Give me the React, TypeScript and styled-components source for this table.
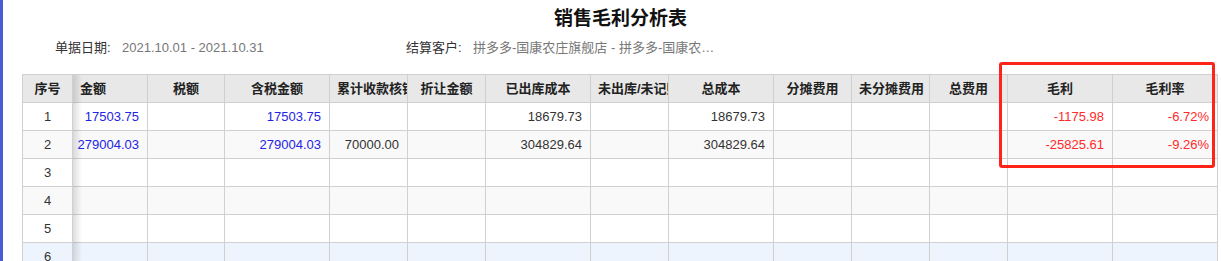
import { Fragment } from "react";
import styled, { createGlobalStyle } from "styled-components";

const GlobalStyle = createGlobalStyle`
  html, body {
    margin: 0;
    padding: 0;
    background: #fff;
  }
  body {
    font-family: "Liberation Sans", "Noto Sans CJK SC", sans-serif;
    color: #333;
  }
`;

const Page = styled.div`
  display: flex;
  min-height: 261px;
`;

const Stripe = styled.div`
  width: 3px;
  flex: none;
  background: #4b5bd5;
`;

const Content = styled.div`
  padding-left: 19px;
  width: 1197px;
`;

const Title = styled.h1`
  margin: 0;
  height: 38px;
  line-height: 38px;
  text-align: center;
  font-size: 19px;
  font-weight: bold;
  color: #111;
`;

const InfoBar = styled.div`
  display: flex;
  padding-left: 33px;
  height: 20px;
  line-height: 20px;
  font-size: 13px;
  margin-bottom: 16px;
`;

const InfoItem = styled.div`
  display: flex;
  width: 351px;
`;

const InfoLabel = styled.span`
  width: 67px;
  flex: none;
  color: #333;
`;

const InfoValue = styled.span<{ $max?: number }>`
  color: #777;
  white-space: nowrap;
  overflow: hidden;
  text-overflow: ellipsis;
  max-width: ${(p) => (p.$max ? `${p.$max}px` : "none")};
`;

const TableWrap = styled.div`
  position: relative;
`;

const COLS = [50, 75, 77, 105, 78, 78, 105, 78, 105, 78, 78, 78, 105, 105];

const Grid = styled.div`
  display: grid;
  grid-template-columns: ${COLS.map((w) => `${w}px`).join(" ")};
  grid-auto-rows: 28px;
  border-left: 1px solid #d0d0d0;
  border-top: 1px solid #d0d0d0;
  width: max-content;
`;

type Align = "left" | "center" | "right";

const Cell = styled.div<{ $align?: Align; $bg: string; $head?: boolean; $color?: string }>`
  position: relative;
  box-sizing: border-box;
  border-right: 1px solid #d0d0d0;
  border-bottom: 1px solid #d0d0d0;
  background: ${(p) => p.$bg};
  padding: ${(p) => (p.$align === "right" ? "0 8px 0 4px" : "0 7px")};
  line-height: 27px;
  font-size: 13px;
  font-weight: ${(p) => (p.$head ? "bold" : "normal")};
  color: ${(p) => p.$color || (p.$head ? "#222" : "#333")};
  text-align: ${(p) => p.$align || "center"};
  white-space: nowrap;
  overflow: hidden;
`;

// frozen first column, with the drop shadow over the next column
const FrozenCell = styled(Cell)`
  overflow: visible;
  z-index: 1;
  &::after {
    content: "";
    position: absolute;
    top: 0;
    bottom: -1px;
    right: -10px;
    width: 9px;
    background: linear-gradient(to right, rgba(0, 0, 0, 0.13), rgba(0, 0, 0, 0));
    pointer-events: none;
  }
`;

const Highlight = styled.div`
  position: absolute;
  left: 977px;
  top: -12px;
  width: 216px;
  height: 106px;
  box-sizing: border-box;
  border: 3px solid #ff2419;
  border-radius: 3px;
  pointer-events: none;
  z-index: 2;
`;

type Column = { title: string; headAlign?: Align; align: Align; color?: string };

const columns: Column[] = [
  { title: "金额", headAlign: "left", align: "right", color: "#2323e6" },
  { title: "税额", align: "right" },
  { title: "含税金额", align: "right", color: "#2323e6" },
  { title: "累计收款核销", headAlign: "left", align: "right" },
  { title: "折让金额", align: "right" },
  { title: "已出库成本", align: "right" },
  { title: "未出库/未记账成本", headAlign: "left", align: "right" },
  { title: "总成本", align: "right" },
  { title: "分摊费用", align: "right" },
  { title: "未分摊费用", align: "right" },
  { title: "总费用", align: "right" },
  { title: "毛利", align: "right", color: "#ff2a2a" },
  { title: "毛利率", align: "right", color: "#ff2a2a" },
];

const rows: string[][] = [
  ["17503.75", "", "17503.75", "", "", "18679.73", "", "18679.73", "", "", "", "-1175.98", "-6.72%"],
  ["279004.03", "", "279004.03", "70000.00", "", "304829.64", "", "304829.64", "", "", "", "-25825.61", "-9.26%"],
  [], [], [], [],
];

const HEAD_BG = "#e8e8e8";
const rowBg = (i: number) => (i === 5 ? "#edf4fd" : i % 2 === 1 ? "#f9f9f9" : "#fff");

export default function App() {
  return (
    <>
      <GlobalStyle />
      <Page>
        <Stripe />
        <Content>
          <Title>销售毛利分析表</Title>
          <InfoBar>
            <InfoItem>
              <InfoLabel>单据日期:</InfoLabel>
              <InfoValue>2021.10.01 - 2021.10.31</InfoValue>
            </InfoItem>
            <InfoItem>
              <InfoLabel>结算客户:</InfoLabel>
              <InfoValue $max={242}>拼多多-国康农庄旗舰店 - 拼多多-国康农庄旗舰店</InfoValue>
            </InfoItem>
          </InfoBar>
          <TableWrap>
            <Grid>
              <FrozenCell $head $bg={HEAD_BG}>序号</FrozenCell>
              {columns.map((c) => (
                <Cell key={c.title} $head $bg={HEAD_BG} $align={c.headAlign || "center"}>
                  {c.title}
                </Cell>
              ))}
              {rows.map((r, i) => (
                <Fragment key={i}>
                  <FrozenCell $bg={rowBg(i)}>{i + 1}</FrozenCell>
                  {columns.map((c, j) => (
                    <Cell key={j} $bg={rowBg(i)} $align={c.align} $color={c.color}>
                      {r[j] || ""}
                    </Cell>
                  ))}
                </Fragment>
              ))}
            </Grid>
            <Highlight />
          </TableWrap>
        </Content>
      </Page>
    </>
  );
}
